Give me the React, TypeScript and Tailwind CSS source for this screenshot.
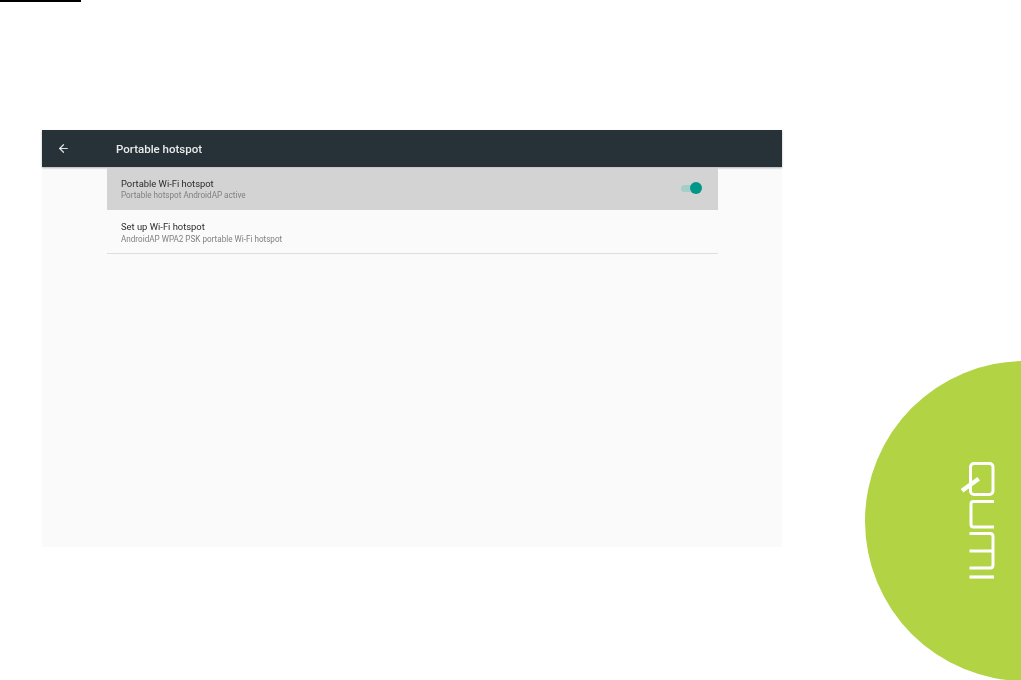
import { ArrowLeft } from "lucide-react";

const ROWS = [
  { title: "Portable Wi-Fi hotspot", desc: "Portable hotspot AndroidAP active", active: true },
  { title: "Set up Wi-Fi hotspot", desc: "AndroidAP WPA2 PSK portable Wi-Fi hotspot", active: false },
];

function QumiLogo() {
  return (
    <svg width="36" height="124" viewBox="0 0 36 124" fill="none" stroke="#ffffff" strokeWidth="3" className="absolute left-[96px] top-[101px]">
      {/* Q */}
      <rect x="9.5" y="1.5" width="22.5" height="31" rx="3.5" />
      <path d="M1 28.7 L17.7 16.7" strokeWidth="4.4" />
      {/* U */}
      <path d="M33 39.5 H12.5 Q10 39.5 10 42 V62.5 Q10 65 12.5 65 H33" />
      {/* M */}
      <path d="M8.5 71.5 H29 Q32 71.5 32 74.5 V103 Q32 106 29 106 H8.5 M8.5 89 H32" />
      {/* I */}
      <path d="M8.5 115 H33" strokeWidth="3.2" />
    </svg>
  );
}

export default function App() {
  return (
    <div className="relative h-[680px] w-[1021px] overflow-hidden bg-white font-['Roboto',sans-serif]">
      <div className="h-[2px] w-[81px] bg-black" />

      <div className="ml-[42px] mt-[128px] flex h-[417px] w-[740px] flex-col bg-[#fafafa]">
        <header className="flex h-[37px] shrink-0 items-center bg-[#263238] shadow-[0_1px_2px_rgba(0,0,0,0.3)]">
          <ArrowLeft className="ml-[15px] h-[13px] w-[13px] text-white/85" strokeWidth={2.2} />
          <h1 className="ml-[46px] mt-[2px] text-[11.5px] font-medium leading-none text-white/90 blur-[0.25px]">Portable hotspot</h1>
        </header>

        <div className="ml-[65px] mt-[1px] w-[611px]">
          {ROWS.map((row) => (
            <div
              key={row.title}
              className={`flex items-center justify-between pl-[14px] pr-[18px] ${
                row.active ? "h-[42px] bg-[#d3d3d3]" : "h-[44px] border-b border-[#dedede] pt-[2px]"
              }`}
            >
              <div className="blur-[0.25px]">
                <p className="text-[9.4px] leading-[12px] text-[#2b2b2b]">{row.title}</p>
                <p className={`text-[8.15px] font-normal leading-[11px] text-[#808080] ${row.active ? "" : "mt-[1px]"}`}>{row.desc}</p>
              </div>
              {row.active && (
                <div className="relative mt-[-2px] h-[7px] w-[19px] rounded-full bg-[#a5cdc9]">
                  <div className="absolute right-[-2px] top-[-2.5px] h-[12px] w-[12px] rounded-full bg-[#009688]" />
                </div>
              )}
            </div>
          ))}
        </div>
      </div>

      {/* green corner badge */}
      <div className="absolute left-[865px] top-[361px] h-[320px] w-[320px] rounded-full bg-[#b1d344]">
        <QumiLogo />
      </div>
    </div>
  );
}
